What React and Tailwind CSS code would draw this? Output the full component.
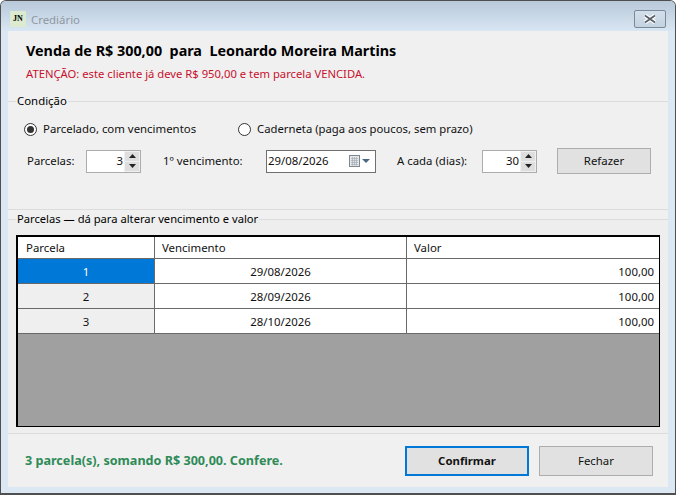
const font = { fontFamily: '"Noto Sans", "Open Sans", sans-serif' };

function Spinner({ value, className = "" }) {
  return (
    <div className={`flex h-[23px] w-[55px] items-stretch border border-[#acacac] bg-white ${className}`}>
      <div className="flex-1 pr-[1px] text-right leading-[19px] text-[#111]">{value}</div>
      <div className="flex w-[16px] flex-col gap-[1px] bg-[#f0f0f0] py-[1px] pl-[1px] pr-[1px]">
        <div className="flex flex-1 items-center justify-center bg-[#dedede]">
          <svg width="7" height="4" viewBox="0 0 7 4"><path d="M3.5 0L7 4H0z" fill="#222" /></svg>
        </div>
        <div className="flex flex-1 items-center justify-center bg-[#dedede]">
          <svg width="7" height="4" viewBox="0 0 7 4"><path d="M0 0h7L3.5 4z" fill="#222" /></svg>
        </div>
      </div>
    </div>
  );
}

function Radio({ checked }) {
  return (
    <span className="flex h-[13px] w-[13px] shrink-0 items-center justify-center rounded-full border border-[#333] bg-white">
      {checked && <span className="h-[7px] w-[7px] rounded-full bg-[#333]" />}
    </span>
  );
}

const rows = [
  ["1", "29/08/2026", "100,00", true],
  ["2", "28/09/2026", "100,00", false],
  ["3", "28/10/2026", "100,00", false],
];

export default function App() {
  return (
    <div style={font} className="flex h-[495px] w-[676px] flex-col overflow-hidden rounded-t-[6px] border border-b-2 border-[#4f4f4f] bg-[#dbe7f3] text-[11.4px] text-[#111]">
      <div className="flex h-[30px] shrink-0 items-start bg-gradient-to-b from-[#b8c9da] to-[#d9e6f3] pl-[9px] pr-[9px] pt-[10px]">
        <div className="flex h-[16px] w-[16px] items-center justify-center bg-[#dcebd0] font-['Liberation_Serif'] text-[8px] font-bold leading-none text-black">JN</div>
        <span className="ml-[5px] text-[11.4px] leading-[17px] text-[#8f979f]">Crediário</span>
        <div className="ml-auto mt-[-1px] flex h-[18px] w-[32px] items-center justify-center rounded-[2px] border border-[#7a8998] bg-gradient-to-b from-[#d3dfeb] to-[#c3d2e1]">
          <svg width="14" height="10" viewBox="0 0 14 10"><path d="M2 1.5L12 8.5M12 1.5L2 8.5" stroke="#fff" strokeWidth="4" /><path d="M2 1.5L12 8.5M12 1.5L2 8.5" stroke="#5a6068" strokeWidth="1.8" /></svg>
        </div>
      </div>

      <div className="mx-[7px] flex h-[456px] w-[660px] flex-col bg-[#f0f0f0]">
        <div className="h-[64px] shrink-0 pl-[18px] pt-[10px]">
          <div className="text-[14.35px] font-bold leading-[20px] text-black whitespace-pre">Venda de R$ 300,00  para  Leonardo Moreira Martins</div>
          <div className="mt-[4px] text-[11.25px] leading-[18px] text-[#c8102e]">ATENÇÃO: este cliente já deve R$ 950,00 e tem parcela VENCIDA.</div>
        </div>

        <fieldset className="h-[115px] shrink-0 border-y border-[#dcdcdc]">
          <legend className="ml-[8px] px-[1px] text-[11.4px] leading-[12px] text-black">Condição</legend>
          <div className="mt-[13px] flex h-[18px] items-center pl-[16px]">
            <Radio checked />
            <span className="ml-[6px] w-[195px] leading-[18px]">Parcelado, com vencimentos</span>
            <Radio />
            <span className="ml-[6px] text-[11.3px] leading-[18px]">Caderneta (paga aos poucos, sem prazo)</span>
          </div>
          <div className="mt-[10px] flex items-center pl-[19px]">
            <span className="w-[59px]">Parcelas:</span>
            <Spinner value="3" />
            <span className="ml-[22px] w-[103px]">1º vencimento:</span>
            <div className="flex h-[23px] w-[110px] items-center border border-[#6f6f6f] bg-white pl-[1px] pr-[5px]">
              <span>29/08/2026</span>
              <svg className="ml-auto" width="21" height="12" viewBox="0 0 21 12">
                <rect x="0.5" y="0.5" width="10" height="11" fill="#e4e7ea" stroke="#7f8790" />
                <path d="M2 3.5h7M2 5.5h7M2 7.5h7M2 9.5h7M3.5 2v8.5M5.5 2v8.5M7.5 2v8.5" stroke="#aab2bb" strokeWidth="0.8" />
                <path d="M13 4h8L17 8z" fill="#4a6785" />
              </svg>
            </div>
            <span className="ml-[21px] w-[85px]">A cada (dias):</span>
            <Spinner value="30" />
            <button className="ml-[20px] h-[26px] w-[94px] border border-[#adadad] bg-[#e1e1e1] text-[11.4px] text-[#111]">Refazer</button>
          </div>
        </fieldset>

        <fieldset className="mt-[3px] flex h-[221px] shrink-0 flex-col border-y border-[#dcdcdc] bg-[#eeeeee] pl-[8px] pr-[8px]">
          <legend className="px-[1px] text-[11.2px] leading-[12px] text-black">Parcelas — dá para alterar vencimento e valor</legend>
          <div className="mt-[10px] flex h-[192px] w-[644px] flex-col border-2 border-b-[1px] border-r-[1px] border-black bg-[#a0a0a0]">
            <div className="grid h-[22px] grid-cols-[137px_252px_1fr] grid-rows-[21px] border-b border-[#696969] bg-white leading-[22px]">
              <div className="border-r border-[#696969] pl-[8px]">Parcela</div>
              <div className="border-r border-[#696969] pl-[7px]">Vencimento</div>
              <div className="pl-[7px]">Valor</div>
            </div>
            {rows.map(([n, d, v, sel]) => (
              <div key={n} className="grid h-[25px] grid-cols-[137px_252px_1fr] grid-rows-[24px] border-b border-[#696969] bg-white leading-[25px]">
                <div className={`border-r border-[#696969] text-center ${sel ? "bg-[#0078d7] text-white" : "bg-[#efefef]"}`}>{n}</div>
                <div className="border-r border-[#696969] text-center">{d}</div>
                <div className="pr-[5px] text-right">{v}</div>
              </div>
            ))}
          </div>
        </fieldset>

        <div className="flex flex-1 items-center pl-[17px]">
          <span className="pt-[1px] text-[12.6px] font-bold text-[#2e8b57]">3 parcela(s), somando R$ 300,00. Confere.</span>
          <button className="ml-auto h-[30px] w-[124px] border-2 border-[#0078d7] bg-[#e1e1e1] text-[11.4px] font-bold text-[#111]">Confirmar</button>
          <button className="ml-[10px] mr-[15px] h-[30px] w-[114px] border border-[#adadad] bg-[#e1e1e1] text-[11.4px] text-[#111]">Fechar</button>
        </div>
      </div>
    </div>
  );
}
